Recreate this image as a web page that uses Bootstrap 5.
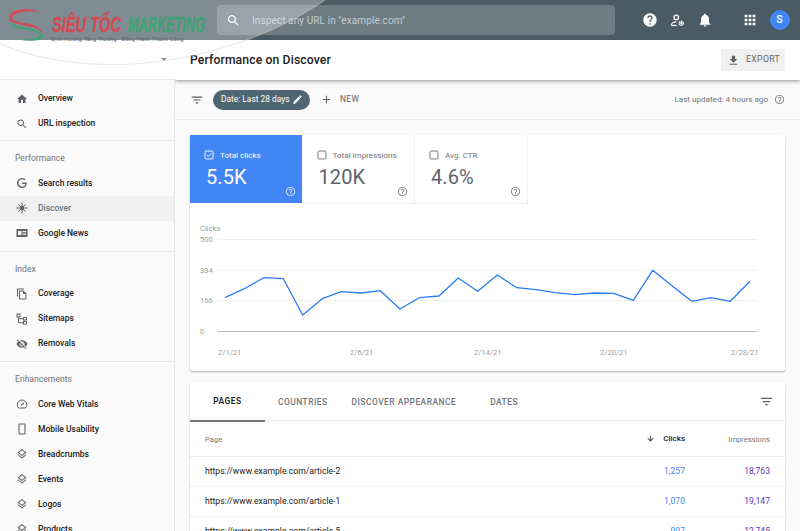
<!DOCTYPE html>
<html lang="en"><head><meta charset="utf-8"><title>Performance on Discover</title>
<link href="https://cdn.jsdelivr.net/npm/bootstrap@5.3.0/dist/css/bootstrap.min.css" rel="stylesheet">
<style>
html,body{height:531px;overflow:hidden}
body{font-family:Roboto,"Liberation Sans",sans-serif;background:#fafafa;color:#212121;position:relative;width:800px}
svg{display:block;flex:none}
.gsc-top{height:40px;background:#4a5b65;padding-left:217px;padding-right:10px}
.gsc-search{width:398px;flex:none;height:30px;border-radius:4px;background:rgba(255,255,255,.2);padding-left:9px;color:#c3cbcf;font-size:10px;letter-spacing:.1px;gap:11px}
.gsc-topicons{margin-left:21px;gap:0}
.gsc-ti{width:27.5px;display:flex;justify-content:center}
.gsc-ti.gsc-apps{margin-left:17.500px}
.gsc-ava{width:20px;height:20px;border-radius:50%;background:#4285f4;color:#fff;font-size:10.5px;font-weight:500;margin-left:6px}
.gsc-body{height:491px}
.gsc-side{width:175px;flex:none;background:#fafafa;border-right:1px solid #e8e8e8;font-size:8.5px;font-weight:500}
.gsc-prop{height:40px;background:#fff;border-bottom:1px solid #e8e8e8;padding:0 9px 0 0;justify-content:flex-end;margin-right:-1px}
.gsc-caret{width:0;height:0;border:3px solid transparent;border-top:3px solid #666;margin-top:3px;margin-right:-1px}
.gsc-group{border-bottom:1px solid #e8e8e8;padding:0 0 5px}
.gsc-group.gsc-first{padding:6px 0 4px}
.gsc-group.gsc-last{border:0}
.gsc-head{height:29.5px;padding:6px 0 0 15px;display:flex;align-items:center;color:#70757a;font-weight:400;font-size:8.6px}
.gsc-item{height:25px;padding-left:15.5px;display:flex;align-items:center;gap:10.5px;color:#212121;text-decoration:none}
.gsc-item.gsc-on{background:#f0f0f0;color:#5f7480}
.gsc-main{min-width:0;flex:1;overflow:hidden}
.gsc-title{height:40px;background:#fff;padding:0 15px;box-shadow:0 1px 4px rgba(0,0,0,.42);position:relative;z-index:1}
.gsc-title h1{font-size:12.2px;font-weight:500;letter-spacing:.12px;margin:0;padding-top:1px;color:#212121}
.gsc-export{height:22px;width:64px;background:#f0f0f0;border:0;border-radius:2px;font-size:8.7px;letter-spacing:.35px;color:#5f6368;padding:0 0 0 6px;gap:6px}
.gsc-filter{height:40px;border-bottom:1px solid #e8e8e8;padding:0 15px;background:#fafafa}
.gsc-chip{height:20px;width:97px;border-radius:10px;background:#4f6672;color:#fff;font-size:8.4px;margin-left:9px;padding:0 7px 0 8px;justify-content:space-between}
.gsc-new{margin-left:10px;gap:7px;font-size:8.4px;letter-spacing:.4px;color:#5f6368;font-weight:400}
.gsc-upd{font-size:8.1px;color:#70757a;gap:6px}
.gsc-panel{background:#fff;margin:15px 15px 0;width:595px;box-shadow:0 1px 2px rgba(0,0,0,.3);border-radius:2px}
.gsc-tiles{height:69px}
.gsc-tile{width:112.5px;height:69px;padding:14px 0 0 14px;position:relative;background:#fff;border-right:1px solid #eee;border-bottom:1px solid #eee;color:#70757a}
.gsc-tile.gsc-act{background:#4285f4;color:#fff;border-color:#fff}
.gsc-lab{font-size:8.1px;gap:6px;height:12px}
.gsc-val{font-size:20px;line-height:1;margin-top:6px;margin-left:2px;color:#5f6368;letter-spacing:.1px}
.gsc-act .gsc-val{color:#fff}
.gsc-q{position:absolute;right:6px;bottom:6px}
.gsc-chart{font-family:Roboto,sans-serif;font-size:7.6px;fill:#9e9e9e}
.gsc-panel2{margin-top:11px}
.gsc-tabs{height:39px;border-bottom:1px solid #e8e8e8;padding-right:11px;font-size:8.4px;letter-spacing:.5px;font-weight:500;color:#70757a}
.gsc-tab{height:39px;display:flex;align-items:center;color:#70757a;text-decoration:none;font-weight:500;padding-top:2px}
.gsc-tab.gsc-sel{color:#212121;border-bottom:2px solid #757575;width:75px;font-weight:600;margin-bottom:-1px;height:40px;justify-content:center}
.gsc-t2{margin-left:13px}
.gsc-t3{margin-left:24px}
.gsc-t4{margin-left:34px}
.gsc-tb{--bs-table-bg:transparent;font-size:8.6px;margin:0;width:100%}
.gsc-tb th,.gsc-tb td{border-bottom:1px solid #eee;padding:1px 0 0;vertical-align:middle;height:30px;color:#212121}
.gsc-tb th{height:35px;padding-top:3px;font-weight:400;color:#70757a;font-size:7.6px}
.gsc-tb .gsc-c1{padding-left:15px}
.gsc-tb .gsc-c2{width:100px;text-align:right;padding-right:0}
.gsc-tb .gsc-c3{width:100px;text-align:right;padding-right:15px}
.gsc-tb td.gsc-c2{color:#4285f4}
.gsc-tb td.gsc-c3{color:#5e35b1}
.gsc-tb th.gsc-c2{color:#212121;font-weight:500;font-size:8px}
.gsc-wm{position:absolute;left:0;top:0;pointer-events:none;z-index:5}
.gsc-brand{position:absolute;left:0;top:0;width:220px;height:46px;z-index:6;pointer-events:none}
.gsc-red,.gsc-green{position:absolute;top:14px;font-family:"Liberation Sans",sans-serif;font-weight:700;font-style:italic;font-size:21.5px;line-height:22px;white-space:nowrap;transform-origin:left center;-webkit-text-stroke:.3px currentColor}
.gsc-red{left:52px;color:#d24a52;transform:scaleX(.68)}
.gsc-green{left:128px;color:#3fa274;transform:scaleX(.59)}
.gsc-tag{position:absolute;left:51px;top:35px;font-size:5.9px;line-height:8px;color:#5c6468;white-space:nowrap}
</style></head>
<body>
<svg width="0" height="0" class="position-absolute"><defs>
<path id="i-help" d="M11 18h2v-2h-2v2zm1-16C6.48 2 2 6.48 2 12s4.48 10 10 10 10-4.48 10-10S17.52 2 12 2zm0 18c-4.41 0-8-3.59-8-8s3.59-8 8-8 8 3.59 8 8-3.59 8-8 8zm0-14c-2.21 0-4 1.79-4 4h2c0-1.1.9-2 2-2s2 .9 2 2c0 2-3 1.75-3 5h2c0-2.25 3-2.5 3-5 0-2.21-1.79-4-4-4z"/>
<path id="i-filter" d="M10 18h4v-2h-4v2zM3 6v2h18V6H3zm3 7h12v-2H6v2z"/>
<path id="i-layers" d="M11.99 18.54l-7.37-5.73L3 14.07l9 7 9-7-1.63-1.27-7.38 5.74zM12 16l7.36-5.73L21 9l-9-7-9 7 1.63 1.27L12 16zm0-11.47L17.74 9 12 13.47 6.26 9 12 4.53z"/>
</defs></svg>

<header class="gsc-top d-flex align-items-center">
  <div class="gsc-search d-flex align-items-center">
    <svg width="15" height="15" viewBox="0 0 24 24" fill="#fff"><path d="M15.5 14h-.79l-.28-.27C15.41 12.59 16 11.11 16 9.5 16 5.91 13.09 3 9.5 3S3 5.91 3 9.5 5.91 16 9.5 16c1.61 0 3.09-.59 4.23-1.57l.27.28v.79l5 4.99L20.49 19l-4.99-5zm-6 0C7.01 14 5 11.99 5 9.5S7.01 5 9.5 5 14 7.01 14 9.5 11.99 14 9.5 14z"/></svg>
    <span>Inspect any URL in "example.com"</span>
  </div>
  <div class="gsc-topicons d-flex align-items-center">
    <span class="gsc-ti"><svg width="16" height="16" viewBox="0 0 24 24" fill="#fff"><path d="M12 2C6.48 2 2 6.48 2 12s4.48 10 10 10 10-4.48 10-10S17.52 2 12 2zm1 17h-2v-2h2v2zm2.07-7.75l-.9.92C13.45 12.9 13 13.5 13 15h-2v-.5c0-1.1.45-2.1 1.17-2.83l1.24-1.26c.37-.36.59-.86.59-1.41 0-1.1-.9-2-2-2s-2 .9-2 2H8c0-2.21 1.79-4 4-4s4 1.79 4 4c0 .88-.36 1.68-.93 2.25z"/></svg></span>
    <span class="gsc-ti"><svg width="15" height="15" viewBox="0 0 24 24" fill="none" stroke="#fff" stroke-width="2"><circle cx="10" cy="7" r="3.6"/><path d="M2.5 20v-1.5c0-3 4.5-4.5 7.5-4.5"/><path d="M2.5 20h8"/><circle cx="18" cy="16.5" r="3.2" stroke-width="2.4" stroke-dasharray="2.4 .8"/><circle cx="18" cy="16.5" r=".8"/></svg></span>
    <span class="gsc-ti"><svg width="16" height="16" viewBox="0 0 24 24" fill="#fff"><path d="M12 22c1.1 0 2-.9 2-2h-4c0 1.1.89 2 2 2zm6-6v-5c0-3.07-1.64-5.64-4.5-6.32V4c0-.83-.67-1.5-1.5-1.5s-1.5.67-1.5 1.5v.68C7.63 5.36 6 7.92 6 11v5l-2 2v1h16v-1l-2-2z"/></svg></span>
    <span class="gsc-ti gsc-apps"><svg width="16" height="16" viewBox="0 0 24 24" fill="#fff"><path d="M4 8h4V4H4v4zm6 12h4v-4h-4v4zm-6 0h4v-4H4v4zm0-6h4v-4H4v4zm6 0h4v-4h-4v4zm6-10v4h4V4h-4zm-6 4h4V4h-4v4zm6 6h4v-4h-4v4zm0 6h4v-4h-4v4z"/></svg></span>
    <span class="gsc-ava d-flex align-items-center justify-content-center">S</span>
  </div>
</header>

<div class="gsc-body d-flex">
  <aside class="gsc-side">
    <div class="gsc-prop d-flex align-items-center"><span class="gsc-caret"></span></div>
    <nav class="gsc-group gsc-first">
      <a class="gsc-item" href="#"><svg width="12" height="12" viewBox="0 0 24 24" fill="#5f6368"><path d="M10 20v-6h4v6h5v-8h3L12 3 2 12h3v8z"/></svg>Overview</a>
      <a class="gsc-item" href="#"><svg width="12" height="12" viewBox="0 0 24 24" fill="#5f6368"><path d="M15.5 14h-.79l-.28-.27C15.41 12.59 16 11.11 16 9.5 16 5.91 13.09 3 9.5 3S3 5.91 3 9.5 5.91 16 9.5 16c1.61 0 3.09-.59 4.23-1.57l.27.28v.79l5 4.99L20.49 19l-4.99-5zm-6 0C7.01 14 5 11.99 5 9.5S7.01 5 9.5 5 14 7.01 14 9.5 11.99 14 9.5 14z"/></svg>URL inspection</a>
    </nav>
    <nav class="gsc-group">
      <div class="gsc-head">Performance</div>
      <a class="gsc-item" href="#"><svg width="12" height="12" viewBox="0 0 24 24" fill="#5f6368"><path d="M21.35 11.1h-9.17v2.73h6.51c-.33 3.81-3.5 5.44-6.5 5.44C8.36 19.27 5 16.25 5 12c0-4.1 3.2-7.27 7.2-7.27 3.09 0 4.9 1.97 4.9 1.97L19 4.72S16.56 2 12.1 2C6.42 2 2.03 6.8 2.03 12c0 5.05 4.13 10 10.22 10 5.35 0 9.25-3.67 9.25-9.09 0-1.15-.15-1.81-.15-1.81z"/></svg>Search results</a>
      <a class="gsc-item gsc-on" href="#"><svg width="12" height="12" viewBox="0 0 24 24" fill="none" stroke="#5f6368" stroke-width="2"><path d="M12 1v22M1 12h22M4.5 4.5l15 15M19.5 4.5l-15 15"/><circle cx="12" cy="12" r="3.5" fill="#5f6368"/></svg>Discover</a>
      <a class="gsc-item" href="#"><svg width="12" height="12" viewBox="0 0 24 24"><path fill="#5f6368" d="M1 4h22v16H1z"/><path fill="#f4f4f4" d="M4 8h7v8H4zM13 8h7v2h-7zM13 11.5h7v1.5h-7zM13 14.500h7V16h-7z"/></svg>Google News</a>
    </nav>
    <nav class="gsc-group">
      <div class="gsc-head">Index</div>
      <a class="gsc-item" href="#"><svg width="12" height="12" viewBox="0 0 24 24" fill="#5f6368"><path d="M16 1H4c-1.100 0-2 .9-2 2v14h2V3h12V1zm-1 4H8c-1.100 0-1.990.9-1.990 2L6 21c0 1.100.89 2 1.990 2H19c1.100 0 2-.9 2-2V11l-6-6zM8 21V7h6v5h5v9H8z"/></svg>Coverage</a>
      <a class="gsc-item" href="#"><svg width="12" height="12" viewBox="0 0 24 24" fill="none" stroke="#5f6368" stroke-width="2"><rect x="2" y="2" width="6" height="6"/><rect x="15" y="9" width="6" height="5"/><rect x="15" y="17" width="6" height="5"/><path d="M5 8v11.500h10M5 11.500h10"/></svg>Sitemaps</a>
      <a class="gsc-item" href="#"><svg width="12" height="12" viewBox="0 0 24 24" fill="#5f6368"><path d="M12 7c2.760 0 5 2.240 5 5 0 .65-.13 1.260-.36 1.830l2.920 2.920c1.510-1.260 2.700-2.890 3.430-4.750-1.730-4.390-6-7.500-11-7.500-1.400 0-2.740.25-3.980.7l2.160 2.160C10.740 7.130 11.350 7 12 7zM2 4.270l2.280 2.280.46.46C3.080 8.300 1.780 10.020 1 12c1.730 4.390 6 7.500 11 7.500 1.550 0 3.030-.3 4.380-.84l.42.42L19.730 22 21 20.730 3.270 3 2 4.270zM7.530 9.800l1.550 1.550c-.05.21-.08.43-.08.65 0 1.660 1.340 3 3 3 .22 0 .44-.03.65-.08l1.550 1.550c-.67.33-1.410.53-2.200.53-2.760 0-5-2.240-5-5 0-.79.2-1.530.53-2.200zm4.310-.78l3.150 3.150.02-.16c0-1.660-1.340-3-3-3l-.17.01z"/></svg>Removals</a>
    </nav>
    <nav class="gsc-group gsc-last">
      <div class="gsc-head">Enhancements</div>
      <a class="gsc-item" href="#"><svg width="12" height="12" viewBox="0 0 24 24" fill="none" stroke="#5f6368" stroke-width="2"><path d="M5 20h14a9.500 9.500 0 1 0-14 0z"/><path d="M10.500 15l5-5" stroke-width="2.600"/></svg>Core Web Vitals</a>
      <a class="gsc-item" href="#"><svg width="12" height="12" viewBox="0 0 24 24" fill="none" stroke="#5f6368" stroke-width="2.200"><rect x="6" y="2" width="12" height="20" rx="1.500"/></svg>Mobile Usability</a>
      <a class="gsc-item" href="#"><svg width="12" height="12" viewBox="0 0 24 24" fill="#5f6368"><use href="#i-layers"/></svg>Breadcrumbs</a>
      <a class="gsc-item" href="#"><svg width="12" height="12" viewBox="0 0 24 24" fill="#5f6368"><use href="#i-layers"/></svg>Events</a>
      <a class="gsc-item" href="#"><svg width="12" height="12" viewBox="0 0 24 24" fill="#5f6368"><use href="#i-layers"/></svg>Logos</a>
      <a class="gsc-item" href="#"><svg width="12" height="12" viewBox="0 0 24 24" fill="#5f6368"><use href="#i-layers"/></svg>Products</a>
    </nav>
  </aside>

  <main class="gsc-main">
    <div class="gsc-title d-flex align-items-center justify-content-between">
      <h1>Performance on Discover</h1>
      <button class="gsc-export btn d-flex align-items-center" type="button"><svg width="13" height="13" viewBox="0 0 24 24" fill="#5f6368"><path d="M19 9h-4V3H9v6H5l7 7 7-7zM5 18v2h14v-2H5z"/></svg>EXPORT</button>
    </div>
    <div class="gsc-filter d-flex align-items-center">
      <svg width="14" height="14" viewBox="0 0 24 24" fill="#5f6368"><use href="#i-filter"/></svg>
      <span class="gsc-chip d-flex align-items-center">Date: Last 28 days<svg width="11" height="11" viewBox="0 0 24 24" fill="#fff"><path d="M3 17.250V21h3.750L17.810 9.940l-3.750-3.750L3 17.250zM20.710 7.040c.39-.39.39-1.020 0-1.410l-2.340-2.340c-.39-.39-1.020-.39-1.410 0l-1.830 1.830 3.750 3.750 1.830-1.830z"/></svg></span>
      <span class="gsc-new d-flex align-items-center"><svg width="13" height="13" viewBox="0 0 24 24" fill="#5f6368"><path d="M19 13h-6v6h-2v-6H5v-2h6V5h2v6h6v2z"/></svg>NEW</span>
      <span class="gsc-upd d-flex align-items-center ms-auto">Last updated: 4 hours ago<svg width="11" height="11" viewBox="0 0 24 24" fill="#80868b"><use href="#i-help"/></svg></span>
    </div>

    <section class="gsc-panel">
      <div class="gsc-tiles d-flex">
        <div class="gsc-tile gsc-act">
          <div class="gsc-lab d-flex align-items-center"><svg width="10" height="10" viewBox="0 0 24 24" fill="none" stroke="#fff" stroke-width="2.200"><rect x="2.500" y="2.500" width="19" height="19" rx="2"/><path d="M6.500 12l4 4 7-8"/></svg>Total clicks</div>
          <div class="gsc-val">5.5K</div>
          <svg class="gsc-q" width="11" height="11" viewBox="0 0 24 24" fill="#cfe0fc"><use href="#i-help"/></svg>
        </div>
        <div class="gsc-tile">
          <div class="gsc-lab d-flex align-items-center"><svg width="10" height="10" viewBox="0 0 24 24" fill="none" stroke="#70757a" stroke-width="2.200"><rect x="2.500" y="2.500" width="19" height="19" rx="2"/></svg>Total impressions</div>
          <div class="gsc-val">120K</div>
          <svg class="gsc-q" width="11" height="11" viewBox="0 0 24 24" fill="#80868b"><use href="#i-help"/></svg>
        </div>
        <div class="gsc-tile">
          <div class="gsc-lab d-flex align-items-center"><svg width="10" height="10" viewBox="0 0 24 24" fill="none" stroke="#70757a" stroke-width="2.200"><rect x="2.500" y="2.500" width="19" height="19" rx="2"/></svg>Avg. CTR</div>
          <div class="gsc-val">4.6%</div>
          <svg class="gsc-q" width="11" height="11" viewBox="0 0 24 24" fill="#80868b"><use href="#i-help"/></svg>
        </div>
      </div>
      <svg class="gsc-chart" width="595" height="167" viewBox="190 204 595 167">
        <text x="200" y="231">Clicks</text>
        <g stroke="#eeeeee" stroke-width="1"><path d="M217.500 239.500H757.500M217.500 270.500H757.500M217.500 300.500H757.500"/></g>
        <path d="M217.500 331.500H757.500" stroke="#bdbdbd" stroke-width="1"/>
        <text x="200" y="242">500</text><text x="200" y="273">334</text><text x="200" y="303">166</text><text x="200" y="334">0</text>
        <text x="218" y="355">2/1/21</text><text x="350" y="355">2/6/21</text><text x="474" y="355">2/14/21</text><text x="600" y="355">2/20/21</text><text x="731" y="355">2/28/21</text>
        <polyline fill="none" stroke="#2a7cf6" stroke-width="1.300" stroke-linejoin="round" points="225,297.700 244.300,288.700 263.700,277.700 283.300,278.700 302.700,315 322.300,298.700 341.300,291.700 361,293 380.300,290.700 400,309 419.300,297.700 439,296 458.300,278 477.700,291.300 497.300,275 516.700,287.700 536,289.700 555.300,292.700 574.700,294.700 594.300,293 613.700,293.300 633.300,300.300 652.700,270.300 672.300,286 691.700,301.300 711,297.700 730.300,301.300 750,281.300"/>
      </svg>
    </section>

    <section class="gsc-panel gsc-panel2">
      <div class="gsc-tabs d-flex align-items-center">
        <a class="gsc-tab gsc-sel" href="#">PAGES</a>
        <a class="gsc-tab gsc-t2" href="#">COUNTRIES</a>
        <a class="gsc-tab gsc-t3" href="#">DISCOVER APPEARANCE</a>
        <a class="gsc-tab gsc-t4" href="#">DATES</a>
        <svg class="ms-auto" width="15" height="15" viewBox="0 0 24 24" fill="#5f6368"><use href="#i-filter"/></svg>
      </div>
      <table class="table gsc-tb">
        <thead><tr><th class="gsc-c1">Page</th><th class="gsc-c2"><span class="d-inline-flex align-items-center gap-2"><svg width="9" height="9" viewBox="0 0 24 24" fill="#212121"><path d="M20 12l-1.410-1.410L13 16.170V4h-2v12.170l-5.580-5.590L4 12l8 8 8-8z"/></svg>Clicks</span></th><th class="gsc-c3">Impressions</th></tr></thead>
        <tbody>
          <tr><td class="gsc-c1">https://www.example.com/article-2</td><td class="gsc-c2">1,257</td><td class="gsc-c3">18,763</td></tr>
          <tr><td class="gsc-c1">https://www.example.com/article-1</td><td class="gsc-c2">1,070</td><td class="gsc-c3">19,147</td></tr>
          <tr><td class="gsc-c1">https://www.example.com/article-5</td><td class="gsc-c2">997</td><td class="gsc-c3">12,745</td></tr>
        </tbody>
      </table>
    </section>
  </main>
</div>

<svg class="gsc-wm" width="340" height="72" viewBox="0 0 340 72">
  <path d="M0 0H325C285 28 215 60 125 64.500C70 66 25 55 0 44Z" fill="#fff" fill-opacity=".3"/>
  <path d="M325 0C285 28 215 60 125 64.500C70 66 25 55 0 44" fill="none" stroke="#d0d0d0" stroke-opacity=".5" stroke-width="1"/>
</svg>
<div class="gsc-brand">
  <svg class="position-absolute top-0 start-0" width="50" height="44" viewBox="0 0 50 44">
    <path fill="#d24a52" d="M40 13C33 8 20 8 13 12C8 15 8 20 12 22C20 26 38 25 43 34C42 28 34 24 24 23C16 22 11 20 12 17C14 12 30 9 40 13Z"/>
    <path fill="#3fa274" d="M10 21C14 27 22 27 30 28C36 29 42 32 43 37C42 41 30 42 17 39.500C26 40 38 39 40 35C36 30 28 30 20 29C14 28 10 25 10 21Z"/>
  </svg>
  <span class="gsc-red">SIÊU TỐC</span>
  <span class="gsc-green">MARKETING</span>
  <span class="gsc-tag">Định Hướng Tăng Trưởng - Đồng Hành Thành Công</span>
</div>
</body></html>
